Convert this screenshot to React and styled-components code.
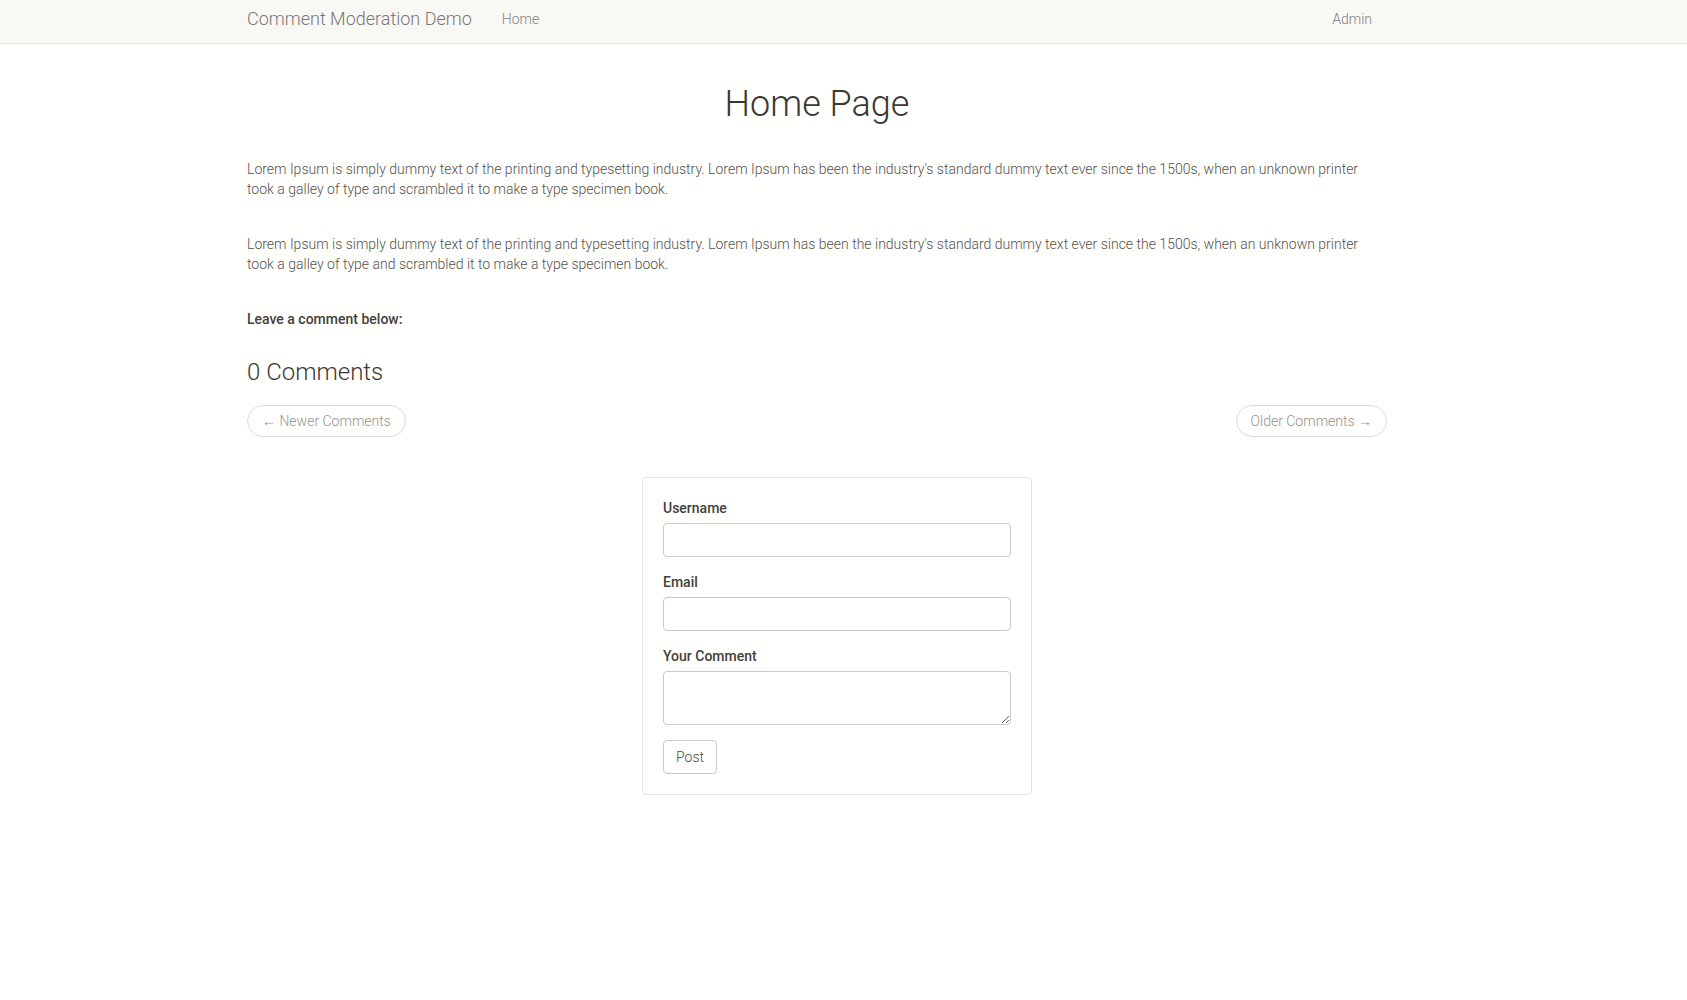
import React from "react";
import styled, { createGlobalStyle } from "styled-components";

const GlobalStyle = createGlobalStyle`
  * {
    box-sizing: border-box;
  }
  html,
  body {
    margin: 0;
    padding: 0;
    background-color: #fffffd;
  }
  body {
    font-family: Roboto, "Liberation Sans", sans-serif;
    font-size: 14px;
    font-weight: 300;
    line-height: 20px;
    color: #4f4a45;
  }
`;

const NavBar = styled.nav`
  height: 44px;
  background-color: #f8f8f5;
  border-bottom: 1px solid #e6e6e2;
`;

const Page = styled.div`
  width: 1634px;
`;

const Container = styled.div`
  width: 1170px;
  margin: 0 auto;
  padding: 0 15px;
`;

const NavInner = styled(Container)`
  display: flex;
  align-items: center;
  height: 43px;
  padding-bottom: 6px;
`;

const Brand = styled.a`
  font-size: 18px;
  color: #7a7773;
  text-decoration: none;
  margin-right: 30px;
`;

const NavLink = styled.a`
  font-size: 14px;
  color: #85827e;
  text-decoration: none;
  margin-left: ${(p) => (p.$right ? "auto" : "0")};
  margin-right: ${(p) => (p.$right ? "15px" : "0")};
`;

const Title = styled.h1`
  margin: 41px 0 0;
  font-size: 36px;
  font-weight: 300;
  line-height: 39.6px;
  text-align: center;
  color: #3b3733;
`;

const Paragraph = styled.p`
  margin: ${(p) => p.$top || "0"} 0 0;
  color: #56514c;
`;

const Lead = styled.p`
  margin: 35px 0 0;
  font-weight: 500;
  color: #45403b;
`;

const CountHeading = styled.h3`
  margin: 30px 0 0;
  font-size: 24px;
  font-weight: 300;
  line-height: 26.4px;
  color: #3b3733;
`;

const Pager = styled.ul`
  display: flex;
  justify-content: space-between;
  list-style: none;
  margin: 20px 0 0;
  padding: 0;
`;

const PagerLink = styled.a`
  display: inline-block;
  padding: 5px 14px;
  border: 1px solid #dddbd6;
  border-radius: 16px;
  color: #96928d;
  font-size: 14px;
  text-decoration: none;
  background-color: #fffffd;
`;

const FormPanel = styled.form`
  width: 390px;
  margin: 40px 0 0 395px;
  padding: 20px;
  border: 1px solid #e4e3df;
  border-radius: 4px;
`;

const Field = styled.div`
  margin-bottom: 15px;
`;

const Label = styled.label`
  display: block;
  margin-bottom: 5px;
  font-weight: 500;
  color: #45403b;
`;

const Input = styled.input`
  display: block;
  width: 100%;
  height: 34px;
  padding: 6px 12px;
  border: 1px solid #cccac6;
  border-radius: 4px;
  background-color: #fffffd;
  font-family: inherit;
  font-size: 14px;
`;

const TextArea = styled.textarea`
  display: block;
  width: 100%;
  height: 54px;
  padding: 6px 12px;
  border: 1px solid #cccac6;
  border-radius: 4px;
  background-color: #fffffd;
  font-family: inherit;
  font-size: 14px;
  resize: vertical;
`;

const PostButton = styled.button`
  height: 34px;
  padding: 6px 12px;
  border: 1px solid #cccac6;
  border-radius: 4px;
  background-color: #fffffd;
  color: #4f4a45;
  font-family: inherit;
  font-size: 14px;
  font-weight: 300;
`;

const lorem =
  "Lorem Ipsum is simply dummy text of the printing and typesetting industry. Lorem Ipsum has been the industry's standard dummy text ever since the 1500s, when an unknown printer took a galley of type and scrambled it to make a type specimen book.";

export default function App() {
  return (
    <>
      <GlobalStyle />
      <NavBar>
        <Page>
          <NavInner>
            <Brand href="#">Comment Moderation Demo</Brand>
            <NavLink href="#">Home</NavLink>
            <NavLink href="#" $right>
              Admin
            </NavLink>
          </NavInner>
        </Page>
      </NavBar>
      <Page>
        <Container>
          <Title>Home Page</Title>
          <Paragraph $top="34px">{lorem}</Paragraph>
          <Paragraph $top="35px">{lorem}</Paragraph>
          <Lead>Leave a comment below:</Lead>
          <CountHeading>0 Comments</CountHeading>
          <Pager>
            <li>
              <PagerLink href="#">← Newer Comments</PagerLink>
            </li>
            <li>
              <PagerLink href="#">Older Comments →</PagerLink>
            </li>
          </Pager>
          <FormPanel onSubmit={(e) => e.preventDefault()}>
            <Field>
              <Label>Username</Label>
              <Input type="text" />
            </Field>
            <Field>
              <Label>Email</Label>
              <Input type="email" />
            </Field>
            <Field>
              <Label>Your Comment</Label>
              <TextArea rows={2} />
            </Field>
            <PostButton type="submit">Post</PostButton>
          </FormPanel>
        </Container>
      </Page>
    </>
  );
}
